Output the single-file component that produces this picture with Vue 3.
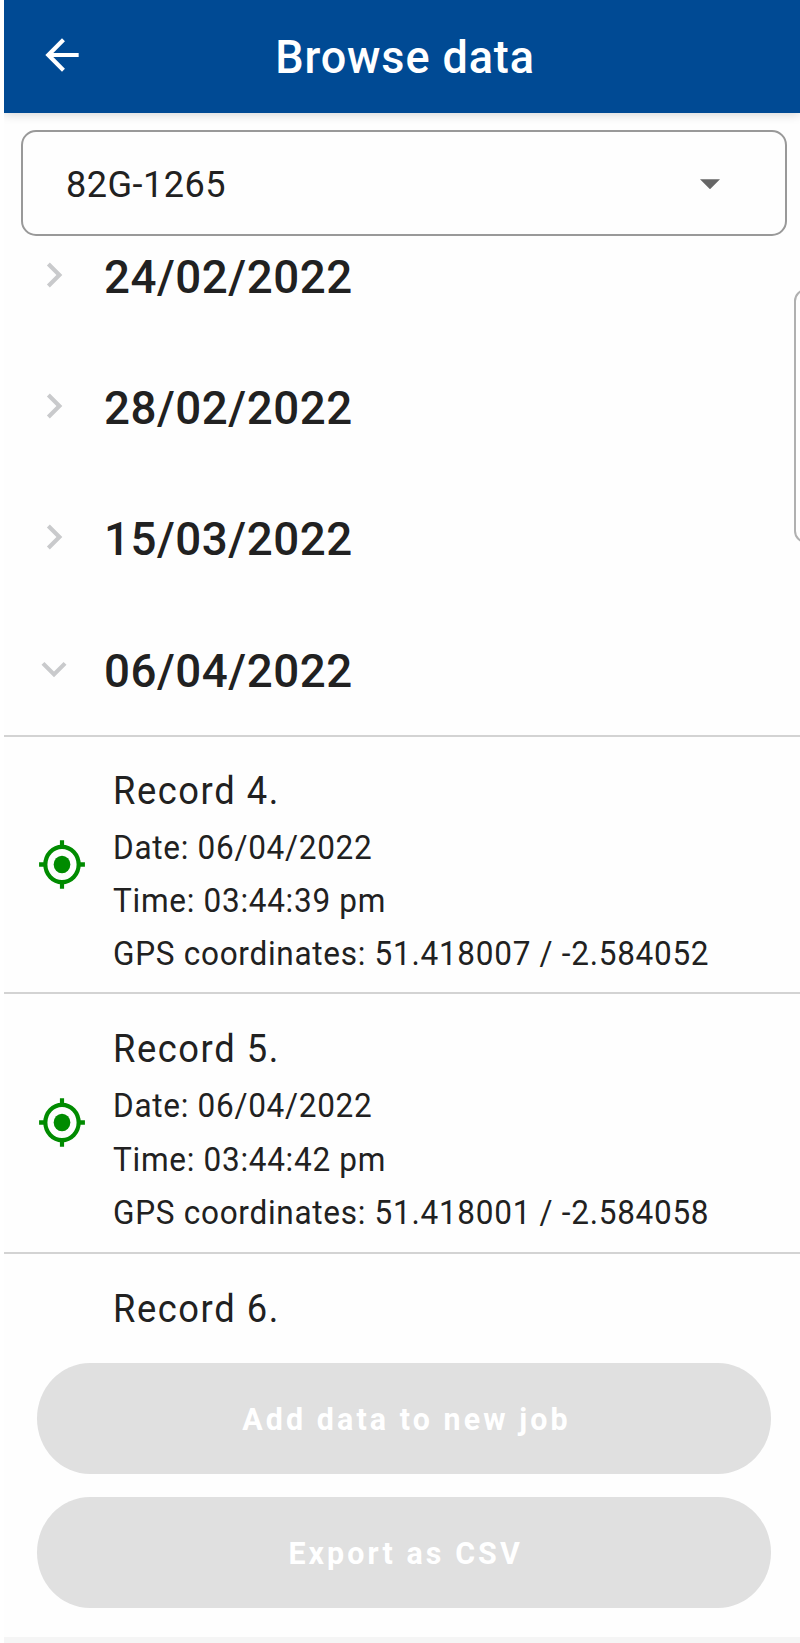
<template>
  <div class="screen">
    <header class="app-bar">
      <svg class="back" viewBox="0 0 24 24">
        <path d="M20 11H7.83l5.59-5.59L12 4l-8 8 8 8 1.41-1.41L7.83 13H20z" />
      </svg>
      <h1 class="title">Browse data</h1>
    </header>

    <div class="select">
      <span class="select-value">{{ selected }}</span>
      <svg class="caret" viewBox="0 0 10 5"><path d="M0 0h10L5 5z" /></svg>
    </div>

    <main class="list">
      <div class="list-content">
        <div
          v-for="day in days"
          :key="day.date"
          class="day"
          :class="{ open: day.open }"
        >
          <svg class="chevron" viewBox="0 0 24 24">
            <path
              v-if="day.open"
              d="M16.59 8.59L12 13.17 7.41 8.59 6 10l6 6 6-6z"
            />
            <path v-else d="M10 6L8.59 7.41 13.17 12l-4.58 4.59L10 18l6-6z" />
          </svg>
          <h2 class="day-date">{{ day.date }}</h2>
        </div>

        <div class="records">
          <div v-for="record in records" :key="record.id" class="record">
            <div class="record-icon">
              <svg
                v-if="record.gps"
                class="gps"
                viewBox="0 0 24 24"
                preserveAspectRatio="none"
              >
                <circle class="ring" cx="12" cy="12" r="8" />
                <circle cx="12" cy="12" r="4" />
                <path d="M11 1h2v3h-2zM11 20h2v3h-2zM1 11h3v2H1zM20 11h3v2h-3z" />
              </svg>
            </div>
            <div class="record-text">
              <h3 class="record-title">Record {{ record.id }}.</h3>
              <template v-if="record.gps">
                <p class="line">Date: {{ record.date }}</p>
                <p class="line">Time: {{ record.time }}</p>
                <p class="line">GPS coordinates: {{ record.gps }}</p>
              </template>
            </div>
          </div>
        </div>
      </div>
    </main>

    <footer class="actions">
      <button class="action" disabled>
        <span class="action-label">Add data to new job</span>
      </button>
      <button class="action" disabled>
        <span class="action-label">Export as CSV</span>
      </button>
    </footer>
    <div class="bottom-bar"></div>

    <div class="side-handle"></div>
  </div>
</template>

<script setup>
import { ref } from "vue";

const selected = ref("82G-1265");

const days = ref([
  { date: "24/02/2022", open: false },
  { date: "28/02/2022", open: false },
  { date: "15/03/2022", open: false },
  { date: "06/04/2022", open: true },
]);

const records = [
  {
    id: 4,
    date: "06/04/2022",
    time: "03:44:39 pm",
    gps: "51.418007 / -2.584052",
  },
  {
    id: 5,
    date: "06/04/2022",
    time: "03:44:42 pm",
    gps: "51.418001 / -2.584058",
  },
  { id: 6 },
];
</script>

<style>
body {
  margin: 0;
  background: #fff;
}
</style>

<style scoped>
.screen {
  position: relative;
  display: flex;
  flex-direction: column;
  box-sizing: border-box;
  height: 1643px;
  margin-left: 4px;
  overflow: hidden;
  background: #fefefe;
  color: #212121;
  font-family: Roboto, sans-serif;
}

h1,
h2,
h3,
p {
  margin: 0;
  white-space: nowrap;
}

/* slightly condensed lettering */
.title,
.select-value,
.day-date,
.action-label {
  transform: scaleX(0.98);
  transform-origin: 0 50%;
}

.record-title,
.line {
  transform: scaleX(0.955);
  transform-origin: 0 50%;
}

.app-bar {
  display: grid;
  grid-template-columns: 84px 1fr 78px;
  align-items: center;
  flex: none;
  height: 113px;
  background: #004a94;
  color: #fff;
  box-shadow: 0 1px 10px rgba(0, 0, 0, 0.18);
}

.back {
  width: 50px;
  height: 50px;
  margin: 0 0 4px 33px;
  fill: #fff;
}

.title {
  font-size: 45.9px;
  font-weight: 500;
  line-height: 60px;
  letter-spacing: 0.9px;
  text-align: center;
  transform-origin: 50% 50%;
}

.select {
  display: flex;
  align-items: center;
  justify-content: space-between;
  flex: none;
  box-sizing: border-box;
  height: 106px;
  margin: 17px 13px 0 17px;
  padding: 2px 65px 0 43px;
  border: 2px solid #999;
  border-radius: 15px;
}

.select-value {
  padding-top: 2px;
  font-size: 36.8px;
  line-height: 48px;
  letter-spacing: 0.5px;
}

.caret {
  width: 20px;
  height: 10.5px;
  fill: #666;
}

.list {
  flex: none;
  height: 1116px;
  overflow: hidden;
}

.list-content {
  margin-top: -24.5px;
}

.day {
  display: flex;
  align-items: center;
  box-sizing: border-box;
  height: 131px;
  padding-left: 25px;
}

.day.open {
  height: 132px;
  padding-top: 2px;
  border-bottom: 2px solid #d3d3d3;
}

.chevron {
  width: 50px;
  height: 50px;
  margin-bottom: 4px;
  fill: #c9cacc;
}

.day-date {
  margin-left: 25px;
  font-size: 46.6px;
  font-weight: 500;
  line-height: 60px;
  letter-spacing: 0.55px;
}

.record {
  display: flex;
  align-items: center;
  padding: 25px 0 12.6px;
  border-bottom: 2px solid #d3d3d3;
}

.record:first-child {
  padding: 24px 0 11.6px;
}

.record-icon {
  flex: none;
  width: 109px;
}

.gps {
  display: block;
  width: 50px;
  height: 53px;
  margin-left: 33.2px;
  margin-top: -13px;
  fill: #008b00;
}

.ring {
  fill: none;
  stroke: #008b00;
  stroke-width: 2;
}

.record-title {
  font-size: 38px;
  font-weight: 400;
  line-height: 60px;
  letter-spacing: 1.65px;
}

.line {
  font-size: 33px;
  line-height: 53.4px;
  letter-spacing: 0.75px;
}

.actions {
  display: flex;
  flex-direction: column;
  gap: 23px;
  flex: none;
  padding: 11px 29px 0 33px;
}

.action {
  height: 111px;
  padding: 2px 0 0 4px;
  border: 0;
  border-radius: 53px / 55.5px;
  background: #e0e0e0;
  color: #fff;
  font: 700 31px/40px Roboto, sans-serif;
  letter-spacing: 3.15px;
}

.action-label {
  display: inline-block;
  transform-origin: 50% 50%;
}

.bottom-bar {
  flex: 1;
  margin-top: 29px;
  background: #f5f5f5;
}

/* panel mostly hidden past the right edge */
.side-handle {
  position: absolute;
  top: 288.5px;
  right: -28px;
  box-sizing: border-box;
  width: 34px;
  height: 254px;
  border: 2px solid #b0b0b0;
  border-radius: 12px;
}
</style>
